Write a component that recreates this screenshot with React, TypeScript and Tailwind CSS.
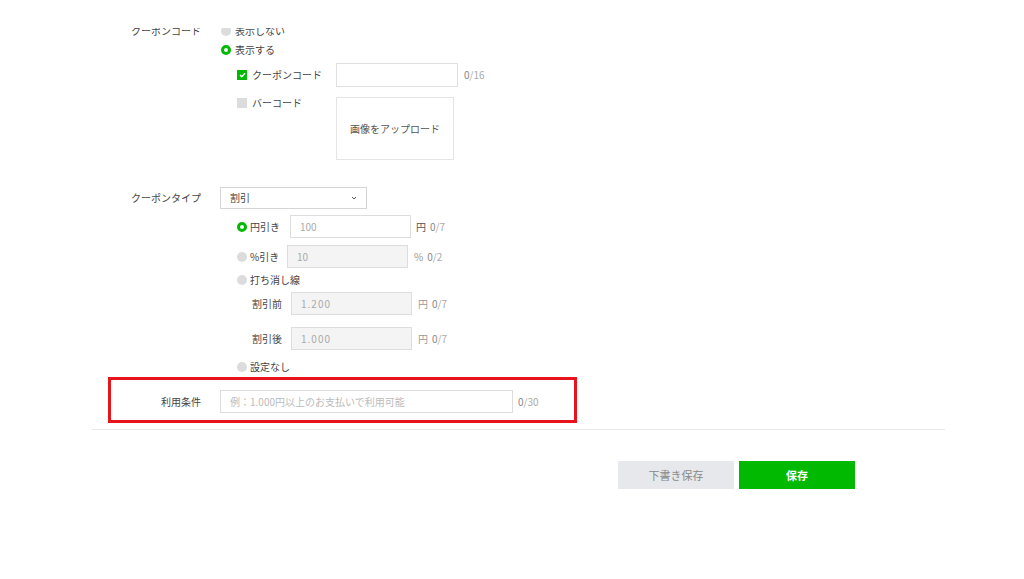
import React from "react";

const F = { fontFamily: '"Noto Sans CJK JP", "Noto Sans", sans-serif' };

function RadioOn() {
  return <span className="inline-block w-[10px] h-[10px] rounded-full border-[3px] border-[#00b900] bg-white shrink-0" />;
}
function RadioOff() {
  return <span className="inline-block w-[10px] h-[10px] rounded-full bg-[#dcdcdc] shrink-0" />;
}
function CheckOn() {
  return (
    <span className="inline-flex items-center justify-center w-[10px] h-[10px] bg-[#00b900] shrink-0">
      <svg width="7" height="6" viewBox="0 0 7 6">
        <path d="M1 3 L2.8 4.8 L6 1.2" stroke="white" strokeWidth="1.4" fill="none" />
      </svg>
    </span>
  );
}
function CheckOff() {
  return <span className="inline-block w-[10px] h-[10px] bg-[#dcdcdc] shrink-0" />;
}
function Count({ max }: { max: string }) {
  return (
    <span className="text-[#aaa]">
      <span className="text-[#888]">0</span>/{max}
    </span>
  );
}

export default function App() {
  return (
    <div style={F} className="w-[1024px] h-[579px] overflow-hidden bg-white text-[10px] text-[#444] leading-none">
      <div className="h-[28px] bg-white" />
      <div className="overflow-hidden">
        <div className="-mt-[8px]">
          {/* display row 1 */}
          <div className="flex items-center h-[21px] pl-[108px]">
            <div className="w-[112px] pr-[19px] text-right">クーポンコード</div>
            <div className="flex items-center gap-[4px] ml-[1px]">
              <RadioOff />
              <span>表示しない</span>
            </div>
          </div>
          <div className="flex items-center h-[18px] pl-[220px]">
            <div className="flex items-center gap-[4px] ml-[1px]">
              <RadioOn />
              <span>表示する</span>
            </div>
          </div>
          {/* coupon code */}
          <div className="flex items-center h-[24px] mt-[4px] pl-[237px]">
            <div className="flex items-center gap-[5px] w-[99px]">
              <CheckOn />
              <span>クーポンコード</span>
            </div>
            <div className="w-[122px] h-[24px] border border-[#e0e0e0] bg-white" />
            <span className="ml-[6px]"><Count max="16" /></span>
          </div>
          {/* barcode */}
          <div className="flex items-start mt-[10px] pl-[237px]">
            <div className="flex items-center gap-[5px] w-[99px] h-[12px]">
              <CheckOff />
              <span>バーコード</span>
            </div>
            <div className="w-[118px] h-[63px] border border-[#e5e5e5] flex items-center justify-center text-[#555]">
              画像をアップロード
            </div>
          </div>
          {/* coupon type */}
          <div className="flex items-center h-[22px] mt-[27px] pl-[108px]">
            <div className="w-[112px] pr-[19px] text-right">クーポンタイプ</div>
            <div className="w-[147px] h-[22px] border border-[#d5d5d5] flex items-center justify-between pl-[9px] pr-[9px]">
              <span>割引</span>
              <svg width="6" height="4" viewBox="0 0 6 4">
                <path d="M1 1 L3 3 L5 1" stroke="#555" strokeWidth="1" fill="none" />
              </svg>
            </div>
          </div>
          {/* yen */}
          <div className="flex items-center h-[23px] mt-[6px] pl-[237px]">
            <div className="flex items-center gap-[3px] w-[53px]">
              <RadioOn />
              <span>円引き</span>
            </div>
            <div className="w-[121px] h-[23px] border border-[#ddd] bg-white flex items-center pl-[9px] text-[#aaa]">100</div>
            <span className="ml-[5px] text-[#555]">円</span>
            <span className="ml-[4px]"><Count max="7" /></span>
          </div>
          {/* percent */}
          <div className="flex items-center h-[23px] mt-[7px] pl-[237px]">
            <div className="flex items-center gap-[3px] w-[50px]">
              <RadioOff />
              <span>%引き</span>
            </div>
            <div className="w-[121px] h-[23px] border border-[#ddd] bg-[#f4f4f4] flex items-center pl-[9px] text-[#aaa]">10</div>
            <span className="ml-[6px] text-[#999]">%</span>
            <span className="ml-[4px]"><Count max="2" /></span>
          </div>
          {/* strike */}
          <div className="flex items-center h-[18px] mt-[3px] pl-[237px]">
            <div className="flex items-center gap-[3px]">
              <RadioOff />
              <span>打ち消し線</span>
            </div>
          </div>
          <div className="flex items-center h-[23px] mt-[3px] pl-[252px]">
            <div className="w-[39px]">割引前</div>
            <div className="w-[121px] h-[23px] border border-[#ddd] bg-[#f4f4f4] flex items-center pl-[9px] text-[#aaa] tracking-[1px]">1.200</div>
            <span className="ml-[6px] text-[#999]">円</span>
            <span className="ml-[4px]"><Count max="7" /></span>
          </div>
          <div className="flex items-center h-[23px] mt-[12px] pl-[252px]">
            <div className="w-[39px]">割引後</div>
            <div className="w-[121px] h-[23px] border border-[#ddd] bg-[#f4f4f4] flex items-center pl-[9px] text-[#aaa] tracking-[1px]">1.000</div>
            <span className="ml-[6px] text-[#999]">円</span>
            <span className="ml-[4px]"><Count max="7" /></span>
          </div>
          <div className="flex items-center h-[18px] mt-[8px] pl-[237px]">
            <div className="flex items-center gap-[3px]">
              <RadioOff />
              <span>設定なし</span>
            </div>
          </div>
          {/* conditions (highlighted) */}
          <div className="ml-[108px] mt-[1px] w-[469px] h-[46px] border-[3px] border-[#e8141b] flex items-start pt-[10px]">
            <div className="w-[109px] pr-[19px] text-right h-[23px] flex items-center justify-end">利用条件</div>
            <div className="w-[293px] h-[23px] border border-[#ddd] bg-white flex items-center pl-[9px] text-[#bbb]">
              例：1.000円以上のお支払いで利用可能
            </div>
            <span className="ml-[5px] h-[23px] flex items-center"><Count max="30" /></span>
          </div>
          {/* divider */}
          <div className="ml-[92px] mt-[6px] w-[853px] h-[1px] bg-[#e8e8e8]" />
          {/* buttons */}
          <div className="flex gap-[5px] pl-[618px] mt-[31px]">
            <button className="w-[116px] h-[28px] bg-[#e6e8eb] text-[#888] text-[11px]">下書き保存</button>
            <button className="w-[116px] h-[28px] bg-[#00b900] text-white font-bold text-[11px]">保存</button>
          </div>
        </div>
      </div>
    </div>
  );
}
